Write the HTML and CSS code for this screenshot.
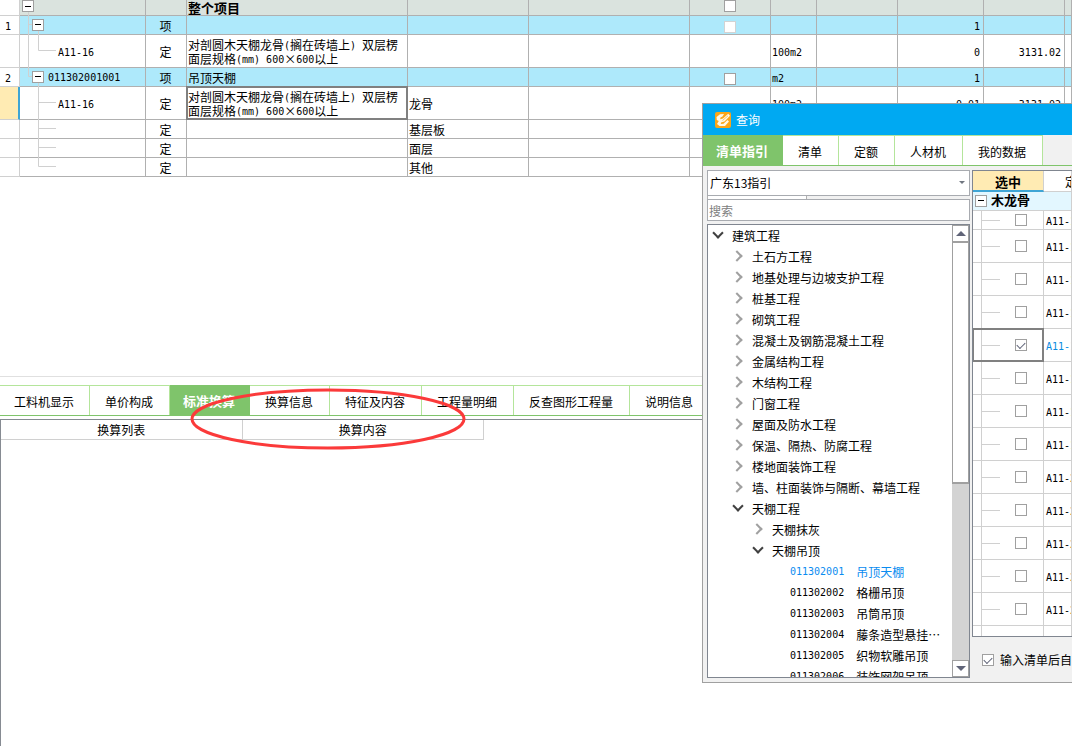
FILE: index.html
```
<!DOCTYPE html>
<html lang="zh-CN">
<head>
<meta charset="utf-8">
<title>工程计价</title>
<link rel="stylesheet" href="styles.css">
</head>
<body>
<main class="workspace">
  <section class="bill-pane">
    <table class="bill">
      <colgroup>
        <col class="w-num"><col class="w-code"><col class="w-kind"><col class="w-name"><col class="w-part"><col class="w-feature"><col class="w-lock"><col class="w-unit"><col class="w-expr"><col class="w-qty"><col class="w-price"><col>
      </colgroup>
      <tbody>
        <tr class="row-root">
          <td class="num"></td>
          <td class="code"><svg class="lines" width="60" height="16"><path d="M8.5 8V16"/></svg><button class="toggle" aria-label="折叠"></button></td>
          <td></td><td class="strong">整个项目</td><td></td><td></td>
          <td class="center"><input type="checkbox" aria-label="锁定整个项目"></td>
          <td></td><td></td><td></td><td></td><td></td>
        </tr>
        <tr class="row-item">
          <td class="num"><span class="mono">1</span></td>
          <td class="code level-1"><svg class="lines" width="60" height="19"><path d="M8.5 0V19M8.5 8.5H14M18.5 10V19"/></svg><button class="toggle" aria-label="折叠"></button></td>
          <td class="center">项</td><td></td><td></td><td></td>
          <td class="center"><input type="checkbox" aria-label="锁定清单1" disabled></td>
          <td></td><td></td><td class="right"><span class="mono">1</span></td><td></td><td></td>
        </tr>
        <tr class="row-quota">
          <td class="num"></td>
          <td class="code level-2"><svg class="lines" width="60" height="33"><path d="M8.5 0V33M18.5 0V15.5H36"/></svg><span class="mono">A11-16</span></td>
          <td class="center">定</td>
          <td class="name">对剖圆木天棚龙骨<span class="mono">(</span>搁在砖墙上<span class="mono">) </span>双层楞<br>面层规格<span class="mono">(mm) 600</span>×<span class="mono">600</span>以上</td>
          <td></td><td></td><td></td>
          <td><span class="mono">100m2</span></td><td></td><td class="right"><span class="mono">0</span></td><td class="right"><span class="mono">3131.02</span></td><td></td>
        </tr>
        <tr class="row-item">
          <td class="num"><span class="mono">2</span></td>
          <td class="code level-1"><svg class="lines" width="60" height="19"><path d="M8.5 0V8.5H14M18.5 10V19"/></svg><button class="toggle" aria-label="折叠"></button><span class="mono">011302001001</span></td>
          <td class="center">项</td><td>吊顶天棚</td><td></td><td></td>
          <td class="center"><input type="checkbox" aria-label="锁定清单2"></td>
          <td><span class="mono">m2</span></td><td></td><td class="right"><span class="mono">1</span></td><td></td><td></td>
        </tr>
        <tr class="row-quota">
          <td class="num current"></td>
          <td class="code level-2"><svg class="lines" width="60" height="33"><path d="M18.5 0V33M18.5 15.5H36"/></svg><span class="mono">A11-16</span></td>
          <td class="center">定</td>
          <td class="name focused">对剖圆木天棚龙骨<span class="mono">(</span>搁在砖墙上<span class="mono">) </span>双层楞<br>面层规格<span class="mono">(mm) 600</span>×<span class="mono">600</span>以上</td>
          <td>龙骨</td><td></td><td></td>
          <td><span class="mono">100m2</span></td><td></td><td class="right"><span class="mono">0.01</span></td><td class="right"><span class="mono">3131.02</span></td><td></td>
        </tr>
        <tr class="row-part">
          <td class="num"></td>
          <td class="code"><svg class="lines" width="60" height="19"><path d="M18.5 0V19M18.5 8.5H36"/></svg></td>
          <td class="center">定</td><td></td><td>基层板</td><td></td><td></td><td></td><td></td><td></td><td></td><td></td>
        </tr>
        <tr class="row-part">
          <td class="num"></td>
          <td class="code"><svg class="lines" width="60" height="19"><path d="M18.5 0V19M18.5 8.5H36"/></svg></td>
          <td class="center">定</td><td></td><td>面层</td><td></td><td></td><td></td><td></td><td></td><td></td><td></td>
        </tr>
        <tr class="row-part">
          <td class="num"></td>
          <td class="code"><svg class="lines" width="60" height="19"><path d="M18.5 0V8.5H36"/></svg></td>
          <td class="center">定</td><td></td><td>其他</td><td></td><td></td><td></td><td></td><td></td><td></td><td></td>
        </tr>
      </tbody>
    </table>
  </section>

  <section class="detail-pane">
    <nav class="tabs detail-tabs">
      <button class="tab">工料机显示</button>
      <button class="tab">单价构成</button>
      <button class="tab active">标准换算</button>
      <button class="tab">换算信息</button>
      <button class="tab">特征及内容</button>
      <button class="tab">工程量明细</button>
      <button class="tab">反查图形工程量</button>
      <button class="tab">说明信息</button>
    </nav>
    <div class="convert">
      <table class="convert-table">
        <thead><tr><th>换算列表</th><th>换算内容</th></tr></thead>
      </table>
    </div>
    <svg class="mark" width="280" height="66" viewBox="0 0 280 66"><ellipse cx="140" cy="33" rx="136" ry="29"/></svg>
  </section>
</main>

<section class="dialog" role="dialog" aria-label="查询">
  <header class="titlebar">
    <svg width="16" height="16" viewBox="0 0 16 16"><rect width="16" height="16" rx="2" fill="#fba618"/><path d="M1.5 5L5 2.2L9 2L7.5 4.5L5.5 5.5L5.2 7.2L8 6.5L13.2 1.8L15 3.8L9.5 9.5L6 10.5L5.8 12L8.5 11.8L12.5 8L14 9.5L10 14H4.5L2 12L3.8 9L1.8 8Z" fill="#fff8e8"/><path d="M7.5 8.5L13 3.8" stroke="#fbc56a" fill="none"/></svg>
    <span>查询</span>
  </header>
  <nav class="tabs query-tabs">
    <button class="tab active">清单指引</button>
    <button class="tab">清单</button>
    <button class="tab">定额</button>
    <button class="tab">人材机</button>
    <button class="tab">我的数据</button>
  </nav>
  <div class="query">
    <div class="guide">
      <div class="combo">
        <select aria-label="指引"><option>广东13指引</option></select>
        <svg width="6" height="4"><path d="M0 0H6L3 3Z" fill="#707680"/></svg>
      </div>
      <div class="splitter"></div>
      <input class="search" type="text" placeholder="搜索" aria-label="搜索">
      <div class="tree-box">
        <ul class="tree">
          <li class="open">建筑工程</li>
          <li class="l1 closed">土石方工程</li>
          <li class="l1 closed">地基处理与边坡支护工程</li>
          <li class="l1 closed">桩基工程</li>
          <li class="l1 closed">砌筑工程</li>
          <li class="l1 closed">混凝土及钢筋混凝土工程</li>
          <li class="l1 closed">金属结构工程</li>
          <li class="l1 closed">木结构工程</li>
          <li class="l1 closed">门窗工程</li>
          <li class="l1 closed">屋面及防水工程</li>
          <li class="l1 closed">保温、隔热、防腐工程</li>
          <li class="l1 closed">楼地面装饰工程</li>
          <li class="l1 closed">墙、柱面装饰与隔断、幕墙工程</li>
          <li class="l1 open">天棚工程</li>
          <li class="l2 closed">天棚抹灰</li>
          <li class="l2 open">天棚吊顶</li>
          <li class="leaf chosen"><span class="mono">011302001</span>吊顶天棚</li>
          <li class="leaf"><span class="mono">011302002</span>格栅吊顶</li>
          <li class="leaf"><span class="mono">011302003</span>吊筒吊顶</li>
          <li class="leaf"><span class="mono">011302004</span>藤条造型悬挂⋯</li>
          <li class="leaf"><span class="mono">011302005</span>织物软雕吊顶</li>
          <li class="leaf"><span class="mono">011302006</span>装饰网架吊顶</li>
        </ul>
        <div class="scrollbar">
          <button aria-label="向上"><svg width="10" height="5"><path d="M0 5L5 0L10 5Z"/></svg></button>
          <div class="track"><div class="thumb"></div></div>
          <button aria-label="向下"><svg width="10" height="5"><path d="M0 0H10L5 5Z"/></svg></button>
        </div>
      </div>
    </div>
    <div class="result">
      <div class="quota-box">
        <table class="quota">
          <colgroup><col class="w-pick"><col></colgroup>
          <thead><tr><th class="picked">选中</th><th class="next">定</th></tr></thead>
          <tbody>
            <tr class="group"><td colspan="2"><button class="toggle" aria-label="折叠"></button>木龙骨</td></tr>
            <tr class="short"><td class="pick"><input type="checkbox" aria-label="选中"></td><td><span class="mono">A11-1</span></td></tr>
            <tr><td class="pick"><input type="checkbox" aria-label="选中"></td><td><span class="mono">A11-1</span></td></tr>
            <tr><td class="pick"><input type="checkbox" aria-label="选中"></td><td><span class="mono">A11-1</span></td></tr>
            <tr><td class="pick"><input type="checkbox" aria-label="选中"></td><td><span class="mono">A11-1</span></td></tr>
            <tr class="chosen"><td class="pick focused"><input type="checkbox" aria-label="选中" checked></td><td><span class="mono">A11-1</span></td></tr>
            <tr><td class="pick"><input type="checkbox" aria-label="选中"></td><td><span class="mono">A11-1</span></td></tr>
            <tr><td class="pick"><input type="checkbox" aria-label="选中"></td><td><span class="mono">A11-1</span></td></tr>
            <tr><td class="pick"><input type="checkbox" aria-label="选中"></td><td><span class="mono">A11-1</span></td></tr>
            <tr><td class="pick"><input type="checkbox" aria-label="选中"></td><td><span class="mono">A11-2</span></td></tr>
            <tr><td class="pick"><input type="checkbox" aria-label="选中"></td><td><span class="mono">A11-2</span></td></tr>
            <tr><td class="pick"><input type="checkbox" aria-label="选中"></td><td><span class="mono">A11-2</span></td></tr>
            <tr><td class="pick"><input type="checkbox" aria-label="选中"></td><td><span class="mono">A11-2</span></td></tr>
            <tr><td class="pick"><input type="checkbox" aria-label="选中"></td><td><span class="mono">A11-2</span></td></tr>
            <tr class="more"><td class="pick"></td><td></td></tr>
          </tbody>
        </table>
      </div>
      <label class="auto"><input type="checkbox" checked>输入清单后自</label>
    </div>
  </div>
</section>
</body>
</html>
```
FILE: styles.css
```
* { box-sizing: border-box; }

body {
  margin: 0;
  overflow: hidden;
  background: #fff;
  color: #000;
  font: 12px/14px "Noto Sans CJK SC", sans-serif;
}

button, input, select { margin: 0; padding: 0; font: inherit; color: inherit; }

.mono {
  font: 10px/10px "DejaVu Sans Mono", "Liberation Mono", monospace;
  vertical-align: 1px;
  white-space: pre;
}

/* shared controls */
.toggle {
  position: relative;
  flex: none;
  width: 12px;
  height: 12px;
  border: 1px solid #a0a0a0;
  background: linear-gradient(#000, #000) center / 6px 1px no-repeat #fff;
}

input[type="checkbox"] {
  appearance: none;
  display: inline-block;
  flex: none;
  width: 12px;
  height: 12px;
  border: 1px solid #a0a0a0;
  background: #fff;
  vertical-align: middle;
}
input[type="checkbox"]:disabled { border-color: #d3d3d3; }
input[type="checkbox"]:checked::before {
  content: "";
  display: block;
  width: 7px;
  height: 4px;
  margin: 2px 1px;
  border: solid #606478;
  border-width: 0 0 1px 1px;
  transform: rotate(-45deg);
}

.tabs { display: flex; border-bottom: 1px solid #7fc46b; }
.tab {
  flex: none;
  height: 30px;
  padding: 4px 12px 0;
  border: solid #b4e59b;
  border-width: 1px 1px 0 0;
  background: #fff;
  text-align: center;
  white-space: nowrap;
}
.tab.active {
  border-color: #7fc46b;
  background: #7fc46b;
  color: #fff;
  font-size: 13px;
  font-weight: bold;
}

/* bill table */
.workspace {
  display: grid;
  grid-template-rows: minmax(0, 504fr) minmax(0, 496fr);
  height: 100vh;
}
.bill-pane { overflow: hidden; }
.bill { width: 100%; table-layout: fixed; border-spacing: 0; }
.w-num { width: 20px; }
.w-code { width: 126px; }
.w-kind { width: 41px; }
.w-name { width: 221px; }
.w-part { width: 121px; }
.w-feature { width: 161px; }
.w-lock, .w-expr, .w-price { width: 81px; }
.w-unit { width: 46px; }
.w-qty { width: 86px; }

.bill td {
  position: relative;
  height: 19px;
  padding: 2px 2px 0 1px;
  border: solid #b0b0b0;
  border-width: 0 1px 1px 0;
  vertical-align: middle;
  white-space: nowrap;
}
.bill .row-root td { height: 16px; padding-top: 0; background: #dae3de; }
.bill .row-item td { background: #aee9fb; }
.bill .row-quota td { height: 33px; }
.bill td.center { text-align: center; }
.bill td.right { padding-right: 3px; text-align: right; }
.bill td.strong { font-size: 13px; font-weight: bold; }
.bill .row-root td.num, .bill td.num {
  padding-right: 4px;
  border-color: #d0d0d0;
  background: #fff;
  text-align: center;
}
.bill td.num.current { border-right: 2px solid #3fa5d5; background: #ffebb3; }
.bill td.code { padding: 0 0 0 2px; line-height: 12px; }
.bill td.level-1 { padding-left: 12px; }
.bill td.level-2 { padding: 2px 0 0 38px; }
.code .toggle { display: inline-block; vertical-align: top; }
.code .toggle + .mono { display: inline-block; margin: 2px 0 0 4px; vertical-align: top; }
.bill .row-root td.code, .bill .row-root td.center { padding-top: 0; padding-bottom: 3px; }
.bill .row-root .toggle, .bill .row-root input { display: block; }
.bill .row-root input { margin: 0 auto; }
.bill .row-item td.code { padding-bottom: 1px; }
.lines { position: absolute; left: 0; top: 0; fill: none; stroke: #d0d0d0; }

.focused::after {
  content: "";
  position: absolute;
  inset: -1px;
  border: 2px solid #808080;
  pointer-events: none;
}

/* detail pane */
.detail-pane {
  position: relative;
  display: flex;
  flex-direction: column;
  padding-top: 8px;
  border-top: 1px solid #e0e0e0;
}
.detail-tabs .tab { padding: 4px 16px 0 15px; }
.detail-tabs .tab:first-child { padding: 4px 15px 0 14px; }
.detail-tabs .tab.active { padding: 1px 14px 0 13px; }
.convert {
  flex: 1;
  margin-top: 3px;
  border: solid #868b92;
  border-width: 1px 0 0 1px;
}
.convert-table { width: 483px; table-layout: fixed; border-spacing: 0; }
.convert-table th {
  height: 20px;
  padding: 1px 0 0;
  border: solid #d0d0d0;
  border-width: 0 1px 1px 0;
  font-weight: normal;
}
.mark {
  position: absolute;
  left: 188px;
  top: 9px;
  fill: none;
  stroke: #fb3a3a;
  stroke-width: 3;
}

/* query window */
.dialog {
  position: absolute;
  left: 702px;
  right: 0;
  top: 103px;
  bottom: 63px;
  display: flex;
  flex-direction: column;
  border: solid #a0a0a0;
  border-width: 1px 0 1px 1px;
  background: #f1f1f1;
  overflow: hidden;
}
.titlebar {
  display: flex;
  align-items: center;
  gap: 5px;
  flex: none;
  height: 31px;
  padding-left: 12px;
  background: #00a9f2;
  color: #fff;
}
.query-tabs .tab { padding: 3px 16px 0 15px; }
.query-tabs .tab.active { padding: 1px 14px 0 13px; }
.query {
  flex: 1;
  display: grid;
  grid-template-columns: 263px minmax(0, 1fr);
  column-gap: 2px;
  min-height: 0;
  padding: 4px 0 4px 4px;
}
.guide { display: flex; flex-direction: column; min-height: 0; }
.combo {
  display: grid;
  grid-template-columns: 1fr auto;
  align-items: center;
  flex: none;
  height: 26px;
  padding-right: 4px;
  border: 1px solid #a8abb0;
  background: #fff;
}
.combo select {
  appearance: none;
  width: 100%;
  height: 24px;
  padding-left: 2px;
  border: 0;
  background: none;
}
.splitter { flex: none; width: 100px; height: 3px; border: solid #b0b0b0; border-width: 0 1px; background: #fff; }
.search {
  flex: none;
  width: 100%;
  height: 22px;
  padding: 0 1px;
  border: 1px solid #a8abb0;
  background: #fff;
}
.search::placeholder { color: #808080; }
.tree-box {
  flex: 1;
  display: grid;
  grid-template-columns: minmax(0, 1fr) 17px;
  min-height: 0;
  margin-top: 3px;
  border: 1px solid #808690;
  background: #fff;
}
.tree { margin: 0; padding: 0; list-style: none; overflow: hidden; }
.tree li {
  display: flex;
  align-items: center;
  height: 21px;
  padding-left: 5px;
  white-space: nowrap;
}
.tree .l1 { padding-left: 25px; }
.tree .l2 { padding-left: 45px; }
.tree .leaf { gap: 12px; padding-left: 82px; }
.tree .chosen { color: #0a8cf0; }
.open::before, .closed::before {
  content: "";
  width: 6px;
  height: 6px;
  margin: 0 11px 0 0;
  border: solid #a0a0a0;
  border-width: 2px 2px 0 0;
  transform: rotate(45deg);
}
.closed::before { margin-top: -1px; }
.open::before {
  margin: -5px 10px 0 1px;
  border-color: #404040;
  transform: rotate(135deg);
}

.scrollbar { display: flex; flex-direction: column; background: #d3d3d3; }
.scrollbar button {
  display: grid;
  place-items: center;
  flex: none;
  height: 17px;
  border: 1px solid #a0a0a0;
  background: #fff;
  fill: #606478;
}
.track { flex: 1; }
.thumb { height: 58%; border: 1px solid #a0a0a0; border-bottom-width: 2px; background: #fff; }

.result { display: flex; flex-direction: column; min-width: 0; min-height: 0; }
.quota-box {
  flex: 1;
  min-height: 0;
  border: solid #808690;
  border-width: 1px 0 1px 1px;
  background: #fff;
  overflow: hidden;
}
.quota { width: 100%; table-layout: fixed; border-spacing: 0; }
.w-pick { width: 71px; }
.quota th, .quota td {
  position: relative;
  height: 33px;
  padding: 2px 0 0 2px;
  border: solid #d0d0d0;
  border-width: 0 1px 1px 0;
  text-align: left;
  white-space: nowrap;
  overflow: hidden;
}
.quota th { height: 21px; font-weight: normal; }
.quota th.next { padding: 2px 0 0 21px; }
.quota th.picked {
  padding-left: 0;
  border-bottom: 2px solid #3fa5d5;
  background: #ffebb3;
  font-size: 13px;
  font-weight: bold;
  text-align: center;
}
.quota .group td {
  height: 19px;
  padding: 0 0 0 2px;
  background: #e3f7ff;
  font-size: 13px;
  font-weight: bold;
}
.group .toggle { display: inline-block; margin: 0 4px 2px 0; vertical-align: middle; }
.quota .short td { height: 19px; }
.quota td.pick { padding: 0 16px 2px 0; text-align: right; }
.quota td.focused { overflow: visible; }
.pick::before {
  content: "";
  position: absolute;
  left: 8px;
  top: 0;
  width: 18px;
  height: 100%;
  border-left: 1px solid #d0d0d0;
  background: linear-gradient(#d0d0d0, #d0d0d0) center / 100% 1px no-repeat;
}
.more .pick::before { background: none; }
.quota .chosen { color: #0a8ce0; }
.auto {
  display: flex;
  align-items: center;
  flex: none;
  gap: 6px;
  height: 41px;
  padding: 4px 0 0 10px;
  white-space: nowrap;
}
```
